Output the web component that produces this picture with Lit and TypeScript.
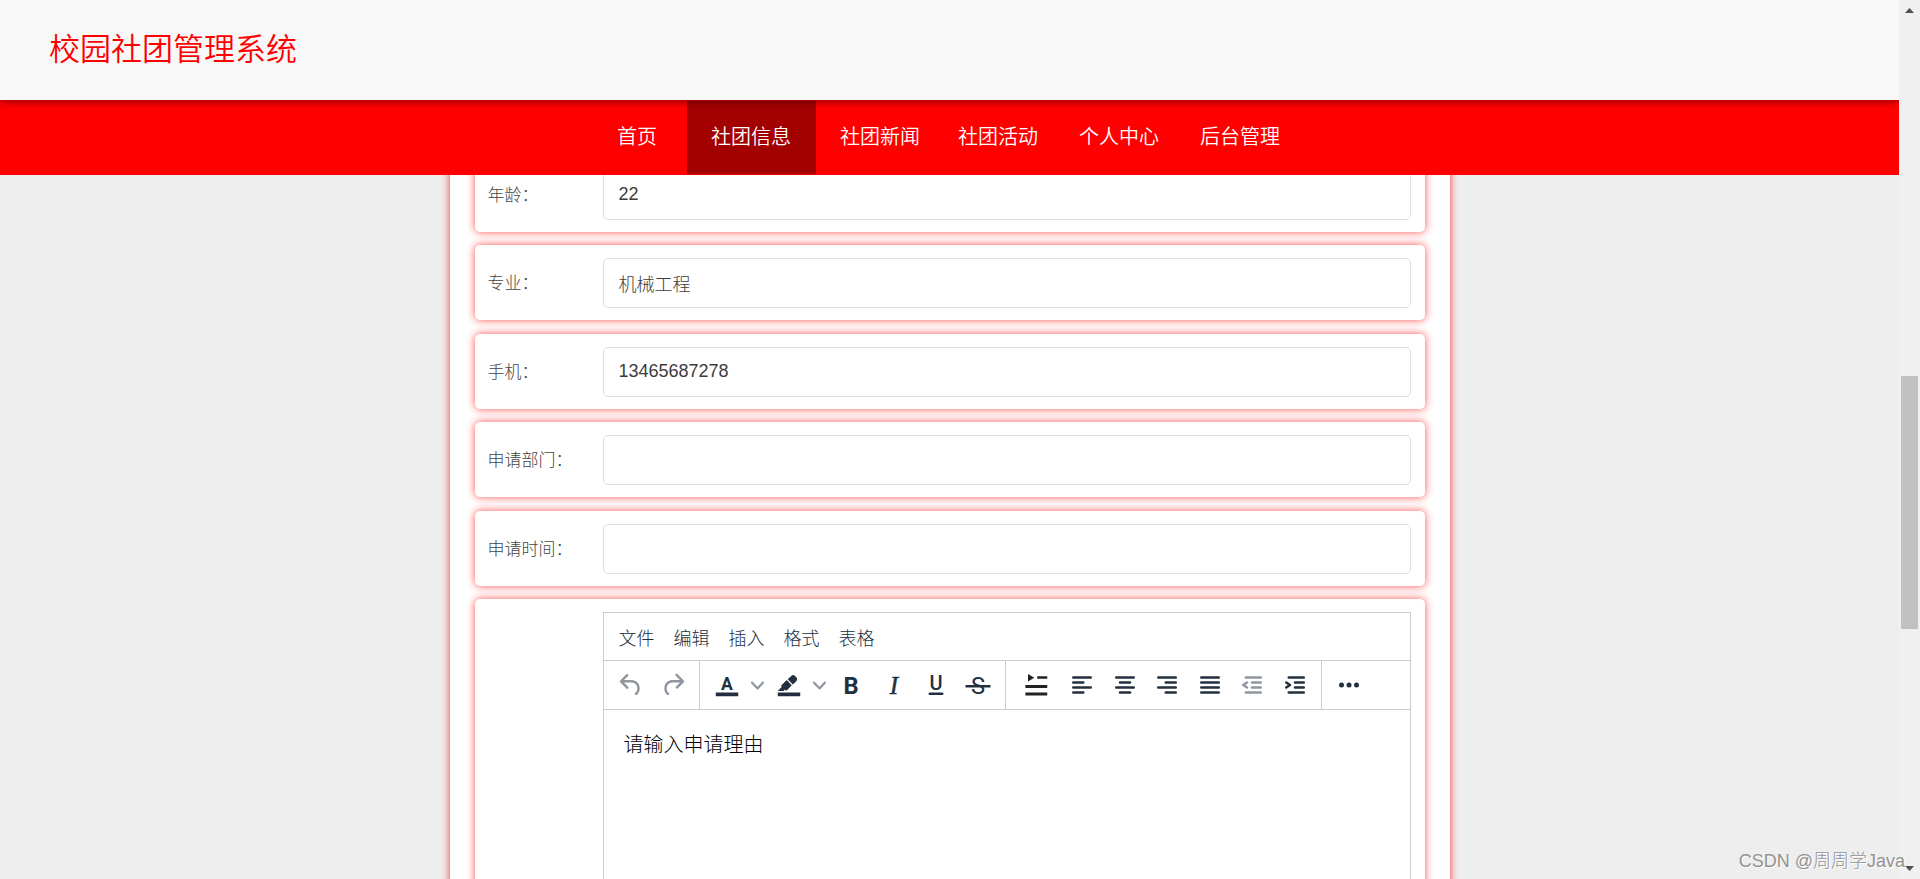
import { LitElement, html, svg, css } from "lit";
import { customElement, state } from "lit/decorators.js";
import { classMap } from "lit/directives/class-map.js";

const NAV = ["首页", "社团信息", "社团新闻", "社团活动", "个人中心", "后台管理"];
const MENUS = ["文件", "编辑", "插入", "格式", "表格"];

const FIELDS = [
  { id: "age", label: "年龄：", value: "22" },
  { id: "major", label: "专业：", value: "机械工程" },
  { id: "phone", label: "手机：", value: "13465687278" },
  { id: "department", label: "申请部门：", value: "" },
  { id: "time", label: "申请时间：", value: "" },
];

/* Rounded 2-unit bars given as [x1, x2, y] */
const bars = (rows: number[][]) =>
  rows.map(([a, b, y]) => svg`<path d="M${a + 1} ${y}H${b - 1}" stroke="currentColor" stroke-width="2" stroke-linecap="round"></path>`);

const ICONS: Record<string, unknown> = {
  undo: svg`<path d="M6.4 8H12c3.7 0 6.2 2 6.8 5.1.6 2.7-.4 5.6-2.3 6.8a1 1 0 0 1-1-1.8c1.1-.6 1.8-2.7 1.4-4.6-.5-2.1-2.1-3.5-4.9-3.5H6.4l3.3 3.3a1 1 0 1 1-1.4 1.4l-5-5a1 1 0 0 1 0-1.4l5-5a1 1 0 0 1 1.4 1.4L6.4 8z"/>`,
  redo: svg`<path d="M17.6 10H12c-2.8 0-4.4 1.4-4.9 3.5-.4 2 .3 4 1.4 4.6a1 1 0 1 1-1 1.8c-2-1.2-2.9-4.1-2.3-6.8.6-3 3-5.1 6.8-5.1h5.6l-3.3-3.3a1 1 0 1 1 1.4-1.4l5 5a1 1 0 0 1 0 1.4l-5 5a1 1 0 0 1-1.4-1.4l3.3-3.3z"/>`,
  color: svg`<path d="M3 18h18v3H3z"/><text class="sans" x="12" y="16" font-size="14">A</text>`,
  highlight: svg`<path d="M3 18h18v3H3z"/><path fill-rule="evenodd" d="M7.7 16.7H3l3.3-3.3-.7-.8L10.2 8l4 4.1-4 4.2c-.2.2-.6.2-.8 0l-.6-.7-1.1 1.1zm5-7.5L11 7.4l3-2.9a2 2 0 0 1 2.6 0L18 6c.7.7.7 2 0 2.7l-2.9 2.9-1.8-1.8-.5-.6"/>`,
  bold: svg`<text class="sans" x="12" y="19" font-size="19">B</text>`,
  italic: svg`<text class="serif" x="12" y="19" font-size="20">I</text>`,
  underline: svg`<text class="sans medium" x="12" y="16" font-size="16">U</text>${bars([[6, 18, 19]])}`,
  strike: svg`<text class="sans regular" x="12" y="19" font-size="19">S</text><path d="M2 12h20v2H2z"/>`,
  lineHeight: svg`<g fill="#222"><path d="M5.600 3.200v6l5-3zM13 5h8v2H13zM3.500 12h17.500v2.400H3.500zM3.500 18h17.500v2.400H3.500z"/></g>`,
  left: bars([[4, 20, 6], [4, 14, 10], [4, 20, 14], [4, 14, 18]]),
  center: bars([[4, 20, 6], [7, 17, 10], [4, 20, 14], [7, 17, 18]]),
  right: bars([[4, 20, 6], [10, 20, 10], [4, 20, 14], [10, 20, 18]]),
  justify: bars([[4, 20, 6], [4, 20, 10], [4, 20, 14], [4, 20, 18]]),
  outdent: svg`${bars([[6, 20, 6], [11, 20, 10], [11, 20, 14], [6, 20, 18]])}<path d="M8 10l-3 2 3 2" fill="none" stroke="currentColor" stroke-width="2" stroke-linecap="round" stroke-linejoin="round"/>`,
  indent: svg`${bars([[6, 20, 6], [11, 20, 10], [11, 20, 14], [6, 20, 18]])}<path d="M5 10l3 2-3 2" fill="none" stroke="currentColor" stroke-width="2" stroke-linecap="round" stroke-linejoin="round"/>`,
  more: svg`<circle cx="6" cy="12" r="2"/><circle cx="12" cy="12" r="2"/><circle cx="18" cy="12" r="2"/>`,
};

@customElement("rich-editor")
class RichEditor extends LitElement {
  static styles = css`
    :host {
      display: block;
      border: 1px solid #ccc;
      color: #222f3e;
      background: #fff;
    }
    button {
      border: 0;
      padding: 0;
      background: none;
      color: inherit;
      font: inherit;
    }
    .menubar {
      display: flex;
      gap: 19px;
      height: 47px;
      padding-left: 15px;
      font-size: 18px;
      font-weight: 300;
      border-bottom: 1px solid #ccc;
    }
    .toolbar {
      display: flex;
      height: 48px;
      border-bottom: 1px solid #ccc;
    }
    .group {
      box-sizing: border-box;
      display: flex;
      justify-content: space-between;
      padding: 0 5px 0 6px;
      border-right: 1px solid #ccc;
    }
    .history { width: 96px; }
    .format { width: 306px; }
    .paragraph { width: 316px; padding-left: 5px; }
    .overflow { border-right: 0; }
    .tool {
      display: flex;
      align-items: center;
      justify-content: center;
      width: 42px;
    }
    .wide { width: 50px; }
    .disabled { color: #9097a0; }
    .split { display: flex; }
    .arrow {
      display: flex;
      align-items: center;
      justify-content: center;
      width: 20px;
      color: #9097a0;
    }
    .icon { width: 30px; height: 30px; fill: currentColor; }
    .chevron { width: 13px; height: 13px; fill: currentColor; }
    .sans { font-family: Roboto, "Liberation Sans", sans-serif; font-weight: 700; text-anchor: middle; }
    .medium { font-weight: 500; }
    .regular { font-weight: 400; }
    .serif { font-family: "Liberation Serif", serif; font-style: italic; text-anchor: middle; stroke: currentColor; stroke-width: 0.4; }
    .content {
      display: block;
      box-sizing: border-box;
      width: 100%;
      height: 420px;
      padding: 20px;
      border: 0;
      outline: 0;
      resize: none;
      background: none;
      color: #000;
      font-family: inherit;
      font-size: 20px;
      font-weight: 300;
      line-height: 30px;
    }
  `;

  private tool(icon: string, label: string, extra = {}) {
    return html`<button type="button" class=${classMap({ tool: true, ...extra })} aria-label=${label}>
      <svg class="icon" viewBox="0 0 24 24" aria-hidden="true">${ICONS[icon]}</svg>
    </button>`;
  }

  private split(icon: string, label: string) {
    return html`<div class="split">
      ${this.tool(icon, label)}
      <button type="button" class="arrow" aria-label="${label}选项">
        <svg class="chevron" viewBox="0 0 10 10" aria-hidden="true">
          <path d="M8.7 2.2c.3-.3.8-.3 1 0 .4.4.4.9 0 1.2L5.700 7.800c-.3.3-.9.3-1.200 0L.2 3.400a.8.8 0 0 1 0-1.200c.3-.3.8-.3 1.100 0L5 6l3.700-3.800z" />
        </svg>
      </button>
    </div>`;
  }

  render() {
    return html`
      <div class="menubar">${MENUS.map((m) => html`<button type="button">${m}</button>`)}</div>
      <div class="toolbar">
        <div class="group history">
          ${this.tool("undo", "撤销", { disabled: true })}${this.tool("redo", "重做", { disabled: true })}
        </div>
        <div class="group format">
          ${this.split("color", "文字颜色")}${this.split("highlight", "背景颜色")}
          ${this.tool("bold", "粗体")}${this.tool("italic", "斜体")}
          ${this.tool("underline", "下划线")}${this.tool("strike", "删除线")}
        </div>
        <div class="group paragraph">
          ${this.tool("lineHeight", "行高", { wide: true })}
          ${this.tool("left", "左对齐")}${this.tool("center", "居中对齐")}
          ${this.tool("right", "右对齐")}${this.tool("justify", "两端对齐")}
          ${this.tool("outdent", "减少缩进", { disabled: true })}${this.tool("indent", "增加缩进")}
        </div>
        <div class="group overflow">${this.tool("more", "更多")}</div>
      </div>
      <textarea class="content" aria-label="申请理由" .value=${"请输入申请理由"}></textarea>
    `;
  }
}

@customElement("app-root")
class AppRoot extends LitElement {
  static styles = css`
    :host {
      display: flex;
      height: 100vh;
      overflow: hidden;
      background: #eee;
      font-family: "Liberation Sans", "Noto Sans CJK SC", sans-serif;
    }
    .page {
      flex: 1;
      min-width: 0;
      display: flex;
      flex-direction: column;
    }
    .header {
      position: relative;
      z-index: 2;
      flex: none;
      display: flex;
      align-items: center;
      height: 100px;
      box-sizing: border-box;
      padding: 0 49px;
      background: #f8f8f8;
      box-shadow: 0 1px 8px rgba(0, 0, 0, 0.5);
    }
    .title {
      margin: 0;
      color: #f00;
      font-size: 31px;
      font-weight: 350;
      line-height: 40px;
    }
    .nav {
      position: relative;
      z-index: 1;
      flex: none;
      display: grid;
      grid-template-columns: 94px 129px 118px 121px 121px 130px;
      justify-content: center;
      padding: 1px 0;
      background: #f00;
    }
    .link {
      padding-left: 24px;
      color: #fff;
      font-size: 20px;
      font-weight: 350;
      line-height: 73px;
      text-decoration: none;
    }
    .active { background: #a30000; }
    .body {
      flex: 1;
      min-height: 0;
      overflow: hidden;
    }
    .panel {
      box-sizing: border-box;
      width: 1000px;
      max-width: 100%;
      margin: -43px auto 0;
      padding: 25px;
      background: #fff;
      box-shadow: 0 0 8px rgba(255, 0, 0, 0.8);
    }
    .card {
      box-sizing: border-box;
      display: grid;
      grid-template-columns: 115px 1fr;
      align-items: center;
      min-height: 75px;
      margin-bottom: 13px;
      padding: 12px 14px 12px 13px;
      border-radius: 5px;
      background: #fff;
      box-shadow: 0 0 8px rgba(255, 0, 0, 0.7);
    }
    .card:nth-child(even) { margin-bottom: 14px; }
    .rich { padding-top: 13px; }
    .label {
      padding-bottom: 3px;
      color: #444;
      font-size: 17px;
      font-weight: 300;
    }
    .input {
      box-sizing: border-box;
      width: 100%;
      height: 50px;
      padding: 0 15px;
      border: 1px solid #dcdfe6;
      border-radius: 5px;
      outline: 0;
      background: #fff;
      color: #3c3c3c;
      font-family: inherit;
      font-size: 18px;
      font-weight: 300;
    }
    .editor { grid-column: 2; }
    .scroll {
      position: relative;
      z-index: 3;
      flex: none;
      display: flex;
      flex-direction: column;
      align-items: center;
      width: 21px;
      background: #f0f0f0;
    }
    .step {
      display: flex;
      justify-content: center;
      align-items: center;
      width: 21px;
      height: 21px;
      padding: 0;
      border: 0;
      background: none;
    }
    .step svg { width: 9px; height: 5px; fill: #505050; }
    .before { flex: 356; }
    .thumb { flex: 253; width: 17px; background: #c1c1c1; }
    .after { flex: 230; }
    .watermark {
      position: absolute;
      right: 15px;
      bottom: 6px;
      z-index: 4;
      color: #929292;
      font-size: 18px;
      font-weight: 300;
      line-height: 24px;
      text-shadow: 1px 1px 0 #fff;
    }
  `;

  @state() private current = 1;

  render() {
    return html`
      <div class="page">
        <header class="header"><h1 class="title">校园社团管理系统</h1></header>
        <nav class="nav">
          ${NAV.map(
            (name, i) => html`<a
              href="#"
              class=${classMap({ link: true, active: i === this.current })}
              @click=${(e: Event) => { e.preventDefault(); this.current = i; }}
            >${name}</a>`
          )}
        </nav>
        <main class="body">
          <form class="panel">
            ${FIELDS.map(
              (f) => html`<div class="card">
                <label class="label" for=${f.id}>${f.label}</label>
                <input class="input" id=${f.id} type="text" .value=${f.value} />
              </div>`
            )}
            <div class="card rich"><rich-editor class="editor"></rich-editor></div>
          </form>
        </main>
      </div>
      <div class="scroll">
        <button class="step" type="button" aria-label="向上滚动">
          <svg viewBox="0 0 9 5"><path d="M0 5L4.500 0 9 5z" /></svg>
        </button>
        <div class="before"></div>
        <div class="thumb"></div>
        <div class="after"></div>
        <button class="step" type="button" aria-label="向下滚动">
          <svg viewBox="0 0 9 5"><path d="M0 0L4.500 5 9 0z" /></svg>
        </button>
      </div>
      <div class="watermark">CSDN @周周学Java</div>
    `;
  }
}
